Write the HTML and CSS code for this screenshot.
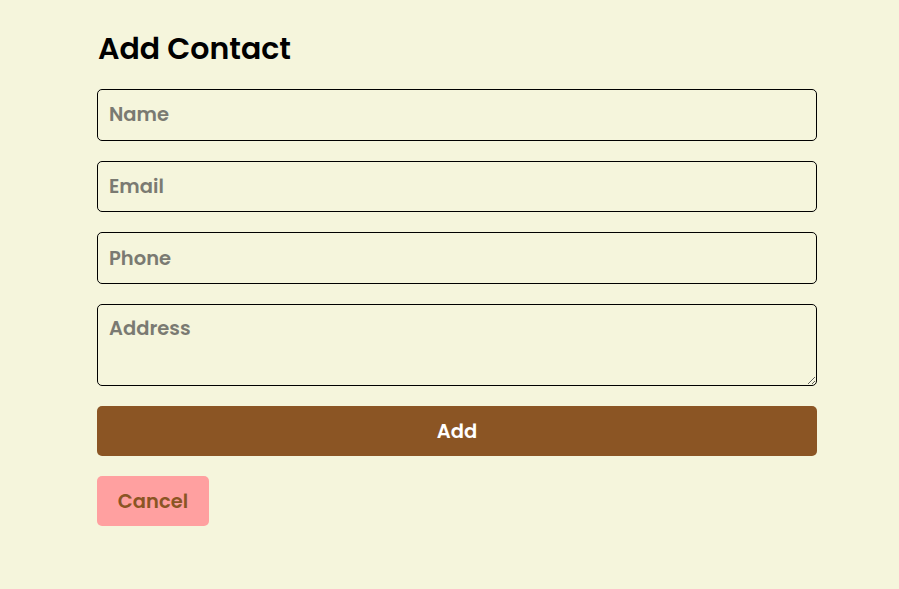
FILE: index.html
```html
<!DOCTYPE html>
<html>
<head>
<meta charset="utf-8">
<link rel="stylesheet" href="styles.css">
</head>
<body>
<div class="page">
  <form class="form">
    <h2 class="title">Add Contact</h2>
    <input class="field" type="text" placeholder="Name">
    <input class="field" type="email" placeholder="Email">
    <input class="field" type="text" placeholder="Phone">
    <textarea class="field area" placeholder="Address"></textarea>
    <button type="button" class="btn add">Add</button>
    <div class="row"><button type="button" class="btn cancel">Cancel</button></div>
  </form>
</div>
</body>
</html>
```
FILE: styles.css
```css
html, body {
  margin: 0;
  padding: 0;
  background: #f5f5dc;
}
body {
  font-family: "Poppins", "Inter", "Noto Sans", sans-serif;
}
.page {
  padding: 28px 0 0 97px;
}
.form {
  width: 720px;
  display: flex;
  flex-direction: column;
  gap: 20px;
}
.title {
  margin: 0 0 0 1px;
  font-size: 30px;
  font-weight: 600;
  color: #000;
  line-height: 41px;
}
.field {
  box-sizing: border-box;
  width: 720px;
  height: 51.7px;
  margin: 0;
  padding: 0 11px;
  border: 1px solid #000;
  border-radius: 5px;
  background: transparent;
  font-family: inherit;
  font-size: 19.5px;
  font-weight: 600;
  color: #000;
  outline: none;
}
.field::placeholder {
  color: #7a7a72;
}
.area {
  height: 82px;
  padding-top: 9px;
  resize: vertical;
  display: block;
}
.btn {
  box-sizing: border-box;
  height: 50px;
  border: none;
  border-radius: 5px;
  font-family: inherit;
  font-size: 19.5px;
  font-weight: 600;
  cursor: pointer;
}
.add {
  width: 720px;
  background: #8b5524;
  color: #fff;
}
.row {
  display: flex;
}
.cancel {
  width: 112px;
  background: #ffa0a0;
  color: #8b5524;
}
```
